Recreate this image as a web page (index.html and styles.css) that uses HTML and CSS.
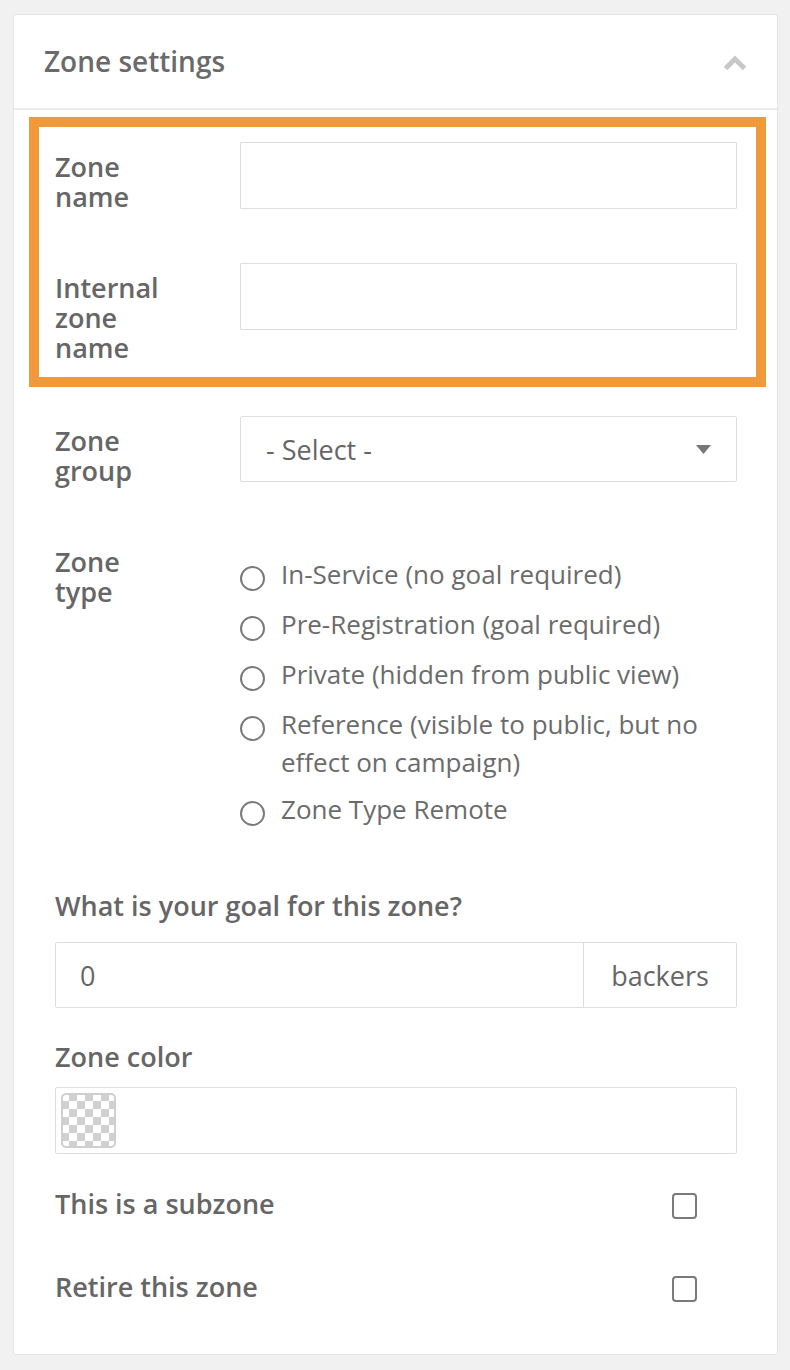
FILE: index.html
```html
<!DOCTYPE html>
<html lang="en">
<head>
<meta charset="utf-8">
<title>Zone settings</title>
<link rel="stylesheet" href="styles.css">
</head>
<body>
<div class="card">
  <div class="card-header">
    <h2 class="card-title">Zone settings</h2>
    <svg class="chevron" width="24" height="16" viewBox="0 0 24 16" aria-hidden="true"><polyline points="2.5,13.5 12,4 21.5,13.5" fill="none" stroke="#c8c8c8" stroke-width="5"/></svg>
  </div>
  <div class="card-body">
    <div class="highlight">
      <div class="row">
        <label class="label" for="zn">Zone<br>name</label>
        <input class="text-input" id="zn" type="text">
      </div>
      <div class="row row-gap">
        <label class="label" for="izn">Internal<br>zone<br>name</label>
        <input class="text-input" id="izn" type="text">
      </div>
    </div>

    <div class="row row-outer group-row">
      <div class="label">Zone<br>group</div>
      <div class="select">
        <span>- Select -</span>
        <svg width="15" height="9" viewBox="0 0 15 9" aria-hidden="true"><polygon points="0,0 15,0 7.5,9" fill="#777"/></svg>
      </div>
    </div>

    <div class="row row-outer type-row">
      <div class="label">Zone<br>type</div>
      <div class="radios">
        <label class="radio"><input type="radio" name="t"><span>In-Service (no goal required)</span></label>
        <label class="radio"><input type="radio" name="t"><span>Pre-Registration (goal required)</span></label>
        <label class="radio"><input type="radio" name="t"><span>Private (hidden from public view)</span></label>
        <label class="radio"><input type="radio" name="t"><span>Reference (visible to public, but no effect on campaign)</span></label>
        <label class="radio"><input type="radio" name="t"><span>Zone Type Remote</span></label>
      </div>
    </div>

    <div class="block">
      <div class="label goal-label">What is your goal for this zone?</div>
      <div class="input-group">
        <input class="group-input" type="text" value="0">
        <span class="addon">backers</span>
      </div>

      <div class="label color-label">Zone color</div>
      <div class="color-box"><span class="swatch"></span></div>

      <div class="check-row first-check">
        <span class="label">This is a subzone</span>
        <input class="checkbox" type="checkbox">
      </div>
      <div class="check-row second-check">
        <span class="label">Retire this zone</span>
        <input class="checkbox" type="checkbox">
      </div>
    </div>
  </div>
</div>
</body>
</html>
```
FILE: styles.css
```css
* { box-sizing: border-box; }

body {
  margin: 0;
  padding: 14px 12px 0 13px;
  background: #f1f1f1;
  font-family: "Open Sans", "Liberation Sans", sans-serif;
  color: #666;
}

.card {
  width: 765px;
  background: #fff;
  border: 1px solid #e4e4e4;
  border-radius: 3px;
}

.card-header {
  height: 95px;
  border-bottom: 2px solid #ebebeb;
  display: flex;
  align-items: center;
  justify-content: space-between;
  padding: 0 30px 0 30px;
}

.card-title {
  margin: 0 0 2px 0;
  font-size: 28px;
  font-weight: 600;
  color: #6a6a6a;
  line-height: 34px;
}

.chevron { display: block; margin-top: 2px; }

.card-body {
  padding: 7px 11px 52px 15px;
}

.highlight {
  border: 10px solid #f0993a;
  padding: 15px 19px 14px 16px;
}

.row {
  display: grid;
  grid-template-columns: 185px 497px;
  align-items: start;
}

.row-gap { margin-top: 51px; }

.row-outer { padding: 0 29px 0 26px; }

.group-row { margin-top: 29px; }
.type-row { margin-top: 53px; }

.label {
  font-size: 27px;
  font-weight: 600;
  line-height: 30px;
  color: #666;
}

.row .label { padding-top: 10px; }
.type-row .label { padding-top: 8px; }

.text-input {
  display: block;
  width: 497px;
  height: 67px;
  margin: 0;
  border: 1px solid #dedede;
  border-radius: 1px;
  background: #fff;
  font: inherit;
  font-size: 27px;
  padding: 0 24px;
  outline: none;
}

.select {
  height: 66px;
  border: 1px solid #dedede;
  border-radius: 2px;
  display: flex;
  align-items: center;
  justify-content: space-between;
  padding: 0 25px 0 25px;
  font-size: 27px;
  color: #666;
}

.select svg { display: block; margin-top: 1px; }

.radios {
  padding-top: 16px;
  display: flex;
  flex-direction: column;
  gap: 9px;
}

.radio {
  display: flex;
  align-items: flex-start;
  gap: 16px;
  min-height: 41px;
  font-size: 26px;
  line-height: 38px;
  color: #6b6b6b;
}

.radio input {
  appearance: none;
  -webkit-appearance: none;
  flex: none;
  width: 25px;
  height: 25px;
  margin: 11px 0 0 0;
  border: 2px solid #7a7a7a;
  border-radius: 50%;
  background: #fff;
}

.block { padding: 0 29px 0 26px; }

.goal-label { margin-top: 60px; }

.input-group {
  margin-top: 21px;
  width: 682px;
  height: 66px;
  border: 1px solid #dedede;
  border-radius: 2px;
  display: flex;
}

.group-input {
  flex: 1;
  min-width: 0;
  border: 0;
  margin: 0;
  padding: 0 24px;
  font: inherit;
  font-size: 27px;
  color: #666;
  outline: none;
  background: transparent;
}

.addon {
  width: 153px;
  border-left: 1px solid #dedede;
  display: flex;
  align-items: center;
  justify-content: center;
  font-size: 27px;
  color: #666;
}

.color-label { margin-top: 34px; }

.color-box {
  margin-top: 15px;
  width: 682px;
  height: 67px;
  border: 1px solid #dedede;
  border-radius: 2px;
  padding: 5px;
}

.swatch {
  display: block;
  width: 55px;
  height: 55px;
  border: 2px solid #cfcfcf;
  border-radius: 5px;
  background: repeating-conic-gradient(#d0d0d0 0 25%, #fff 0 50%) -2px -2px / 16px 16px;
}

.check-row {
  display: flex;
  align-items: center;
  justify-content: space-between;
  padding-right: 40px;
}

.first-check { margin-top: 35px; }
.second-check { margin-top: 53px; }

.checkbox {
  appearance: none;
  -webkit-appearance: none;
  width: 25px;
  height: 26px;
  margin: 3px 0 0 0;
  border: 2px solid #7a7a7a;
  border-radius: 4px;
  background: #fff;
}
```
